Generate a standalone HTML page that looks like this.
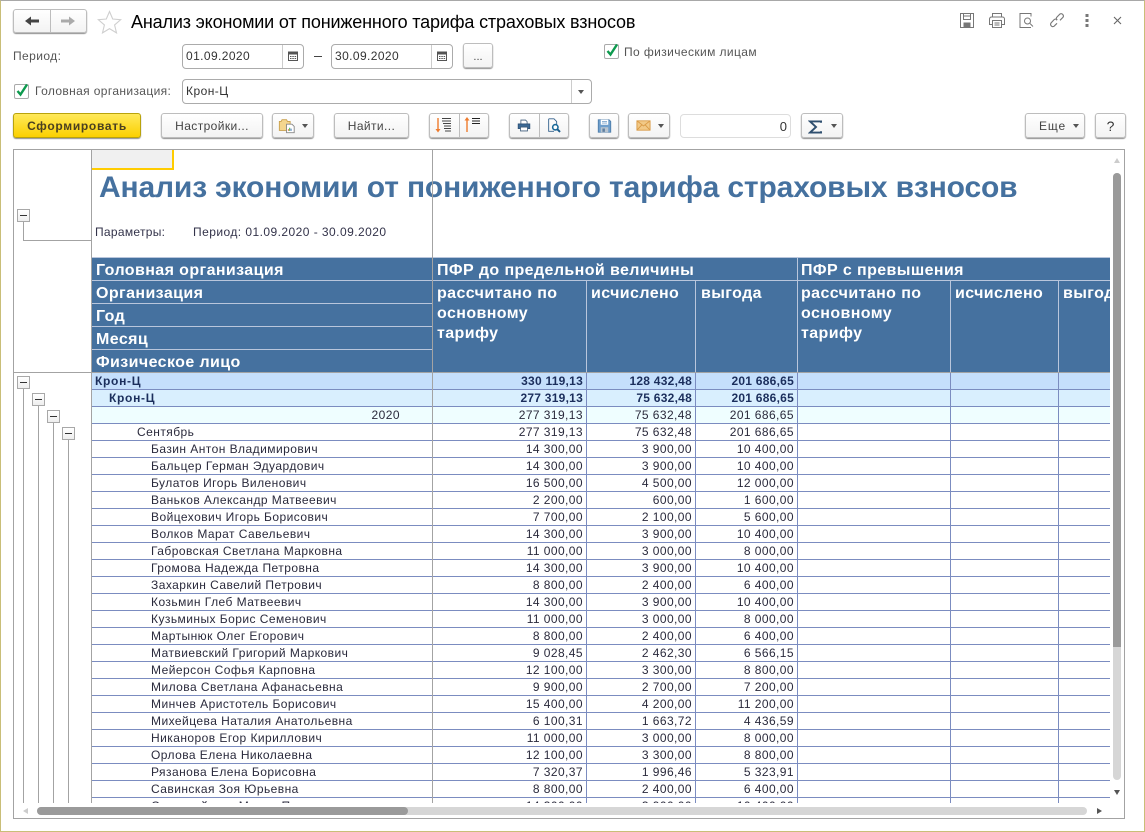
<!DOCTYPE html>
<html lang="ru"><head><meta charset="utf-8"><title>Анализ экономии</title>
<style>
html,body{margin:0;padding:0;background:#fff}
#w{position:relative;width:1145px;height:832px;overflow:hidden;background:#fff;font:12px/14px "Liberation Sans",sans-serif;color:#333}
#w div,#w span.a,#w svg{position:absolute}
.edge{box-sizing:border-box;left:0;top:0;width:1145px;height:832px;border:1px solid #c9be78;border-top-color:#a8a8a8}
.b{box-sizing:border-box;height:25px;top:113px;border:1px solid #bdbdbd;border-radius:3px;background:linear-gradient(#fff,#f3f3f3);box-shadow:0 1px 1px #8f8f8f;text-align:center;line-height:25px;color:#444}
.f{box-sizing:border-box;height:25px;border:1px solid #ababab;border-radius:4px;background:#fff;color:#333;line-height:23px;padding-left:3px}
.dv{top:0;bottom:0;width:1px;background:#bdbdbd}
.t{white-space:nowrap}
.dd{width:0;height:0;border:3.5px solid transparent;border-top:4px solid #555;border-bottom:0}
.l{color:#555;white-space:nowrap}
.h{white-space:nowrap;color:#fff;font-weight:bold;font-size:16px;line-height:20px;letter-spacing:.4px}
.hl{background:#b9c6dc}
.g{background:#a3a3a3}
.m{box-sizing:border-box;width:13px;height:13px;border:1px solid #a8a8a8;background:linear-gradient(#fff,#eee)}
.m:after{content:"";position:absolute;left:2px;right:2px;top:5px;height:1px;background:#333}
#tb{position:absolute;left:92px;top:373px;width:1019px;border-collapse:separate;border-spacing:0;table-layout:fixed;font-size:12px;letter-spacing:.42px;color:#2a2a3c}
#tb td{height:16px;padding:0 3px 0 0;border-bottom:1px solid #7b8cc0;border-right:1px solid #7b8cc0;text-align:right;white-space:nowrap;overflow:hidden;line-height:16px}
#tb td:first-child{text-align:left;padding-left:59px;letter-spacing:.45px}
#tb .r1 td{background:#c5dffc;font-weight:bold;color:#1b2e5c;letter-spacing:.25px}
#tb .r2 td{background:#d9effe;font-weight:bold;color:#1b2e5c;letter-spacing:.25px}
#tb .r3 td{background:#effeff}
#tb .r1 td:first-child{padding-left:3px;letter-spacing:.7px}
#tb .r2 td:first-child{padding-left:17px;letter-spacing:.7px}
#tb .r3 td:first-child{text-align:right;padding-right:32px}
#tb .r4 td:first-child{padding-left:45px}
</style></head><body>
<div id="w">
<div class="edge"></div>

<!-- nav -->
<div class="b" style="left:13px;top:9px;width:74px;height:24px"><div class="dv" style="left:36px"></div></div>
<svg style="left:24px;top:15px" width="16" height="12" viewBox="0 0 16 12"><path d="M1 6L7 1.500V4.500H15V7.500H7V10.500z" fill="#444"/></svg>
<svg style="left:60px;top:15px" width="16" height="12" viewBox="0 0 16 12"><path d="M15 6L9 1.500V4.500H1V7.500H9V10.500z" fill="#aaa"/></svg>
<svg style="left:97px;top:10px" width="25" height="24" viewBox="0 0 25 24"><path d="M12.500 1.500l3.200 7.500 8 .7-6.100 5.300 1.900 7.900-7-4.200-7 4.200 1.900-7.900-6.100-5.300 8-.7z" fill="#fff" stroke="#cfcfcf" stroke-width="1.100"/></svg>
<div class="t" style="left:131px;top:11px;font-size:18px;line-height:22px;color:#000;letter-spacing:-.16px">Анализ экономии от пониженного тарифа страховых взносов</div>

<!-- top right icons -->
<svg style="left:958px;top:12px" width="18" height="17" viewBox="0 0 18 17" fill="none" stroke="#777"><path d="M2.500 1.500h13v14h-13zM5.500 1.500v6h7v-6M6 4h6"/><path d="M6 11h6v4.500H6z" fill="#777"/></svg>
<svg style="left:988px;top:12px" width="18" height="17" viewBox="0 0 18 17" fill="none" stroke="#777"><path d="M4.500 5V1.500h9V5M4 12.500H1.500V7a2 2 0 0 1 2-2h11a2 2 0 0 1 2 2v5.500H14M4.500 8.500h9v7h-9zM6.500 11h5M6.500 13h5"/></svg>
<svg style="left:1018px;top:12px" width="18" height="17" viewBox="0 0 18 17" fill="none" stroke="#777"><path d="M8 1.500H2v14h11"/><path d="M8 1.500h5v3"/><circle cx="9.500" cy="9" r="3"/><path d="M12 11.500l3 3"/></svg>
<svg style="left:1048px;top:11px" width="18" height="18" viewBox="0 0 18 18" fill="none" stroke="#777" stroke-width="1.100"><path d="M7.500 10.500l-3 3a2.300 2.300 0 0 1-3-3.300l3-3.200a2.300 2.300 0 0 1 3.300 0M10.500 7.500l3-3a2.300 2.300 0 0 0-3-3.300L7.500 4.200a2.300 2.300 0 0 0 0 3.300" transform="translate(1.500 1.800)"/></svg>
<svg style="left:1084px;top:13px" width="6" height="15" viewBox="0 0 6 15" fill="#777"><rect x="1.500" y="1" width="3" height="3"/><rect x="1.500" y="6" width="3" height="3"/><rect x="1.500" y="11" width="3" height="3"/></svg>
<svg style="left:1112px;top:15px" width="11" height="11" viewBox="0 0 11 11" stroke="#666" stroke-width="1.100"><path d="M2 2l7 7M9 2l-7 7"/></svg>

<!-- filters -->
<div class="l" style="left:13px;top:49px;letter-spacing:.42px">Период:</div>
<div class="f" style="left:182px;top:44px;width:122px;letter-spacing:.4px">01.09.2020<div class="dv" style="left:99px;background:#ccc"></div></div>
<svg style="left:287px;top:50px" width="12" height="12" viewBox="0 0 12 12"><path d="M1.500 2.500h9v8h-9z" fill="#fff" stroke="#555"/><path d="M1 1.500h10v3H1z" fill="#555"/><path d="M3 6h1.500v1H3zM5.300 6h1.500v1H5.300zM7.600 6h1.500v1H7.600zM3 8h1.500v1H3zM5.300 8h1.500v1H5.300zM7.600 8h1.500v1H7.600z" fill="#555"/></svg>
<div style="left:314px;top:56px;width:8px;height:1px;background:#444"></div>
<div class="f" style="left:331px;top:44px;width:122px;letter-spacing:.4px">30.09.2020<div class="dv" style="left:99px;background:#ccc"></div></div>
<svg style="left:436px;top:50px" width="12" height="12" viewBox="0 0 12 12"><path d="M1.500 2.500h9v8h-9z" fill="#fff" stroke="#555"/><path d="M1 1.500h10v3H1z" fill="#555"/><path d="M3 6h1.500v1H3zM5.300 6h1.500v1H5.300zM7.600 6h1.500v1H7.600zM3 8h1.500v1H3zM5.300 8h1.500v1H5.300zM7.600 8h1.500v1H7.600z" fill="#555"/></svg>
<div class="b" style="left:463px;top:43px;width:30px;font-size:11px;line-height:27px">...</div>

<div style="box-sizing:border-box;left:604px;top:44px;width:15px;height:15px;border:1px solid #aaa;border-radius:2px;background:#fff"></div>
<svg style="left:605px;top:42px" width="15" height="16" viewBox="0 0 15 16"><path d="M2.500 9l3 3.500L12 2.500" fill="none" stroke="#0d9a4e" stroke-width="2.400"/></svg>
<div class="l" style="left:624px;top:45px;letter-spacing:.4px">По физическим лицам</div>

<div style="box-sizing:border-box;left:14px;top:84px;width:15px;height:15px;border:1px solid #aaa;border-radius:2px;background:#fff"></div>
<svg style="left:15px;top:82px" width="15" height="16" viewBox="0 0 15 16"><path d="M2.500 9l3 3.500L12 2.500" fill="none" stroke="#0d9a4e" stroke-width="2.400"/></svg>
<div class="l" style="left:35px;top:84px;letter-spacing:.37px">Головная организация:</div>
<div class="f" style="left:182px;top:79px;width:410px;letter-spacing:.45px">Крон-Ц<div class="dv" style="left:388px;background:#ccc"></div></div>
<div class="dd" style="left:578px;top:90px"></div>

<!-- toolbar -->
<div class="b" style="left:13px;width:128px;background:linear-gradient(#ffe95a,#fbd000);border-color:#b9a30c;font-weight:bold;color:#4a4020;letter-spacing:.7px">Сформировать</div>
<div class="b" style="left:161px;width:102px;letter-spacing:.4px">Настройки...</div>
<div class="b" style="left:272px;width:42px"><div class="dd" style="left:29px;top:10px"></div></div>
<svg style="left:278px;top:117px" width="18" height="17" viewBox="0 0 20 18"><path d="M1.500 4.500h2l1-2h5l1 2h3v10h-12z" fill="#f4d68e" stroke="#c9a04c"/><path d="M9.500 7.500h6l2.500 2.500v7h-8.500z" fill="#fff" stroke="#888"/><path d="M11.500 15v-2" stroke="#d63"/><path d="M13 15v-3.500" stroke="#3a3"/><path d="M14.500 15v-2.500" stroke="#36b"/></svg>
<div class="b" style="left:334px;width:75px;letter-spacing:.4px">Найти...</div>
<div class="b" style="left:429px;width:60px"><div class="dv" style="left:29px"></div></div>
<svg style="left:435px;top:116px" width="20" height="19" viewBox="0 0 20 19" fill="none"><path d="M3 2v13" stroke="#ee7b2d" stroke-width="1.400"/><path d="M.5 13h5L3 16.500z" fill="#ee7b2d"/><path d="M7 2.500h9M7 5h9M8 7.500h8M9 10h7M9 12.500h7M10 15h6" stroke="#444"/></svg>
<svg style="left:464px;top:116px" width="20" height="19" viewBox="0 0 20 19" fill="none"><path d="M3 3v13" stroke="#ee7b2d" stroke-width="1.400"/><path d="M.5 4.500h5L3 1z" fill="#ee7b2d"/><path d="M8 2.500h8M8 5h8M8 7.500h8" stroke="#222"/></svg>
<div class="b" style="left:509px;width:60px"><div class="dv" style="left:29px"></div></div>
<svg style="left:517px;top:118px" width="14" height="15" viewBox="0 0 18 17"><path d="M5 6V1.500h6l2 2V6" fill="#fff" stroke="#3c5a78"/><path d="M1.500 6.500h15v6h-15z" fill="#3c6a96" stroke="#2f5276"/><path d="M4.500 10.500h9v5h-9z" fill="#fff" stroke="#3c5a78"/></svg>
<svg style="left:546px;top:117px" width="16" height="17" viewBox="0 0 18 18" fill="none"><path d="M3 1.500h6l3 3v4M3 1.500v14h6" stroke="#33608c"/><circle cx="10.500" cy="11" r="3" stroke="#1a6a9a" stroke-width="1.800" fill="#fff"/><path d="M12.800 13.300l3 3" stroke="#1a5a8a" stroke-width="2.200"/></svg>
<div class="b" style="left:589px;width:30px"></div>
<svg style="left:597px;top:118px" width="15" height="16" viewBox="0 0 18 18"><path d="M1.500 1.500h13l2 2v13h-15z" fill="#6f9fcc" stroke="#4a7aa8"/><path d="M4.500 1.500h9v6h-9z" fill="#fff"/><path d="M6 3.500h6M6 5.500h6" stroke="#7fa6cc"/><path d="M4.500 10.500h9v6h-9z" fill="#b9c4cf"/><path d="M6.500 12h3v4h-3z" fill="#5f7f9f"/></svg>
<div class="b" style="left:628px;width:42px"><div class="dd" style="left:29px;top:10px"></div></div>
<svg style="left:636px;top:120px" width="15" height="11" viewBox="0 0 16 13" preserveAspectRatio="none"><path d="M1 1h14v11H1z" fill="#f2c987" stroke="#d99a45"/><path d="M1 1l7 6 7-6M1 12l5-6M15 12l-5-6" fill="none" stroke="#d99a45"/></svg>
<div class="f" style="left:680px;top:114px;width:111px;height:24px;border-color:#ddd;text-align:right;padding-right:3px;line-height:24px;color:#333;font-size:13px">0</div>
<div class="b" style="left:801px;width:42px"><div class="dd" style="left:29px;top:10px"></div></div>
<svg style="left:808px;top:120px" width="15" height="14" viewBox="0 0 15 15" preserveAspectRatio="none"><path d="M13 3V1.500H2L8 7.500 2 13.500h11V12" fill="none" stroke="#2f4f6f" stroke-width="2"/></svg>
<div class="b" style="left:1025px;width:60px;text-align:left;padding-left:13px;letter-spacing:.9px">Еще<div class="dd" style="left:47px;top:10px"></div></div>
<div class="b" style="left:1095px;width:31px;font-size:14px;color:#333">?</div>

<!-- report frame -->
<div style="box-sizing:border-box;left:13px;top:149px;width:1112px;height:670px;border:1px solid #a3a3a3"></div>
<div id="rep" style="left:14px;top:150px;width:1096px;height:653px;overflow:hidden">
<div style="left:78px;top:0;width:80px;height:18px;background:#f0f0f0;border-right:2px solid #fc0;border-bottom:2px solid #fc0"></div>
<div class="t" style="left:85px;top:20px;font-size:30px;line-height:36px;font-weight:bold;color:#45719f;letter-spacing:-.15px">Анализ экономии от пониженного тарифа страховых взносов</div>
<div class="t" style="left:81px;top:75px;color:#33334a;letter-spacing:.3px">Параметры:</div>
<div class="t" style="left:179px;top:75px;color:#33334a;letter-spacing:.45px">Период: 01.09.2020 - 30.09.2020</div>
</div>

<!-- header block -->
<div style="left:92px;top:257px;width:1018px;height:1px;background:#b9c6dc"></div>
<div style="left:92px;top:258px;width:1018px;height:114px;background:#45719f"></div>
<div class="hl" style="left:92px;top:280px;width:1018px;height:1px"></div>
<div class="hl" style="left:92px;top:303px;width:340px;height:1px"></div>
<div class="hl" style="left:92px;top:326px;width:340px;height:1px"></div>
<div class="hl" style="left:92px;top:349px;width:340px;height:1px"></div>
<div class="hl" style="left:586px;top:281px;width:1px;height:91px"></div>
<div class="hl" style="left:695px;top:281px;width:1px;height:91px"></div>
<div class="hl" style="left:797px;top:258px;width:1px;height:114px"></div>
<div class="hl" style="left:950px;top:281px;width:1px;height:91px"></div>
<div class="hl" style="left:1058px;top:281px;width:1px;height:91px"></div>
<div class="h" style="left:96px;top:261px">Головная организация</div>
<div class="h" style="left:96px;top:284px">Организация</div>
<div class="h" style="left:96px;top:307px">Год</div>
<div class="h" style="left:96px;top:330px">Месяц</div>
<div class="h" style="left:96px;top:353px">Физическое лицо</div>
<div class="h" style="left:437px;top:261px">ПФР до предельной величины</div>
<div class="h" style="left:801px;top:261px">ПФР с превышения</div>
<div class="h" style="left:437px;top:284px">рассчитано по<br>основному<br>тарифу</div>
<div class="h" style="left:591px;top:284px">исчислено</div>
<div class="h" style="left:701px;top:284px">выгода</div>
<div class="h" style="left:801px;top:284px">рассчитано по<br>основному<br>тарифу</div>
<div class="h" style="left:955px;top:284px">исчислено</div>
<div style="left:1063px;top:284px;width:47px;height:22px;overflow:hidden"><div class="h" style="left:0;top:0">выгода</div></div>

<!-- data -->
<div style="left:0;top:0;width:1110px;height:803px;overflow:hidden">
<table id="tb"><colgroup><col style="width:341px"><col style="width:154px"><col style="width:109px"><col style="width:102px"><col style="width:153px"><col style="width:108px"><col style="width:52px"></colgroup>
<tr class="r1"><td>Крон-Ц</td><td>330 119,13</td><td>128 432,48</td><td>201 686,65</td><td></td><td></td><td></td></tr>
<tr class="r2"><td>Крон-Ц</td><td>277 319,13</td><td>75 632,48</td><td>201 686,65</td><td></td><td></td><td></td></tr>
<tr class="r3"><td>2020</td><td>277 319,13</td><td>75 632,48</td><td>201 686,65</td><td></td><td></td><td></td></tr>
<tr class="r4"><td>Сентябрь</td><td>277 319,13</td><td>75 632,48</td><td>201 686,65</td><td></td><td></td><td></td></tr>
<tr><td>Базин Антон Владимирович</td><td>14 300,00</td><td>3 900,00</td><td>10 400,00</td><td></td><td></td><td></td></tr>
<tr><td>Бальцер Герман Эдуардович</td><td>14 300,00</td><td>3 900,00</td><td>10 400,00</td><td></td><td></td><td></td></tr>
<tr><td>Булатов Игорь Виленович</td><td>16 500,00</td><td>4 500,00</td><td>12 000,00</td><td></td><td></td><td></td></tr>
<tr><td>Ваньков Александр Матвеевич</td><td>2 200,00</td><td>600,00</td><td>1 600,00</td><td></td><td></td><td></td></tr>
<tr><td>Войцехович Игорь Борисович</td><td>7 700,00</td><td>2 100,00</td><td>5 600,00</td><td></td><td></td><td></td></tr>
<tr><td>Волков Марат Савельевич</td><td>14 300,00</td><td>3 900,00</td><td>10 400,00</td><td></td><td></td><td></td></tr>
<tr><td>Габровская Светлана Марковна</td><td>11 000,00</td><td>3 000,00</td><td>8 000,00</td><td></td><td></td><td></td></tr>
<tr><td>Громова Надежда Петровна</td><td>14 300,00</td><td>3 900,00</td><td>10 400,00</td><td></td><td></td><td></td></tr>
<tr><td>Захаркин Савелий Петрович</td><td>8 800,00</td><td>2 400,00</td><td>6 400,00</td><td></td><td></td><td></td></tr>
<tr><td>Козьмин Глеб Матвеевич</td><td>14 300,00</td><td>3 900,00</td><td>10 400,00</td><td></td><td></td><td></td></tr>
<tr><td>Кузьминых Борис Семенович</td><td>11 000,00</td><td>3 000,00</td><td>8 000,00</td><td></td><td></td><td></td></tr>
<tr><td>Мартынюк Олег Егорович</td><td>8 800,00</td><td>2 400,00</td><td>6 400,00</td><td></td><td></td><td></td></tr>
<tr><td>Матвиевский Григорий Маркович</td><td>9 028,45</td><td>2 462,30</td><td>6 566,15</td><td></td><td></td><td></td></tr>
<tr><td>Мейерсон Софья Карповна</td><td>12 100,00</td><td>3 300,00</td><td>8 800,00</td><td></td><td></td><td></td></tr>
<tr><td>Милова Светлана Афанасьевна</td><td>9 900,00</td><td>2 700,00</td><td>7 200,00</td><td></td><td></td><td></td></tr>
<tr><td>Минчев Аристотель Борисович</td><td>15 400,00</td><td>4 200,00</td><td>11 200,00</td><td></td><td></td><td></td></tr>
<tr><td>Михейцева Наталия Анатольевна</td><td>6 100,31</td><td>1 663,72</td><td>4 436,59</td><td></td><td></td><td></td></tr>
<tr><td>Никаноров Егор Кириллович</td><td>11 000,00</td><td>3 000,00</td><td>8 000,00</td><td></td><td></td><td></td></tr>
<tr><td>Орлова Елена Николаевна</td><td>12 100,00</td><td>3 300,00</td><td>8 800,00</td><td></td><td></td><td></td></tr>
<tr><td>Рязанова Елена Борисовна</td><td>7 320,37</td><td>1 996,46</td><td>5 323,91</td><td></td><td></td><td></td></tr>
<tr><td>Савинская Зоя Юрьевна</td><td>8 800,00</td><td>2 400,00</td><td>6 400,00</td><td></td><td></td><td></td></tr>
<tr><td>Старовойтова Мария Петровна</td><td>14 300,00</td><td>3 900,00</td><td>10 400,00</td><td></td><td></td><td></td></tr>
</table>
</div>

<!-- gray grid lines -->
<div class="g" style="left:91px;top:150px;width:1px;height:653px"></div>
<div class="g" style="left:432px;top:150px;width:1px;height:653px"></div>
<div class="g" style="left:14px;top:372px;width:1096px;height:1px"></div>

<!-- tree -->
<div class="g" style="left:23px;top:221px;width:1px;height:20px"></div>
<div class="g" style="left:23px;top:240px;width:68px;height:1px"></div>
<div class="m" style="left:17px;top:209px"></div>
<div class="g" style="left:23px;top:388px;width:1px;height:415px"></div>
<div class="g" style="left:38px;top:405px;width:1px;height:398px"></div>
<div class="g" style="left:53px;top:422px;width:1px;height:381px"></div>
<div class="g" style="left:68px;top:439px;width:1px;height:364px"></div>
<div class="m" style="left:17px;top:376px"></div>
<div class="m" style="left:32px;top:393px"></div>
<div class="m" style="left:47px;top:410px"></div>
<div class="m" style="left:62px;top:427px"></div>

<!-- scrollbars -->
<div style="left:1113px;top:173px;width:8px;height:607px;border-radius:4px;background:#d6d6d6"></div>
<div style="left:1113px;top:173px;width:8px;height:474px;border-radius:4px 4px 0 0;background:#9a9a9a"></div>
<div style="left:1114px;top:158px;width:0;height:0;border:3px solid transparent;border-bottom:5px solid #ccc;border-top:0"></div>
<div style="left:1114px;top:790px;width:0;height:0;border:3px solid transparent;border-top:5px solid #555;border-bottom:0"></div>
<div style="left:37px;top:807px;width:1050px;height:8px;border-radius:4px;background:#d6d6d6"></div>
<div style="left:37px;top:807px;width:371px;height:8px;border-radius:4px;background:#9a9a9a"></div>
<div style="left:23px;top:808px;width:0;height:0;border:3px solid transparent;border-right:5px solid #ccc;border-left:0"></div>
<div style="left:1097px;top:808px;width:0;height:0;border:3px solid transparent;border-left:5px solid #555;border-right:0"></div>
</div>
</body></html>
